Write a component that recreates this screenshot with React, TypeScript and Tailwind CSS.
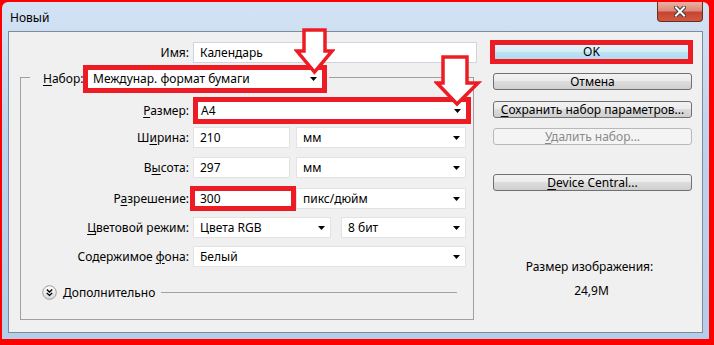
import React from "react";

function Tri() {
  return (
    <svg width="7" height="4" viewBox="0 0 7 4" className="shrink-0">
      <path d="M0 0H7L3.5 4Z" fill="#000" />
    </svg>
  );
}

function U({ children }: { children: React.ReactNode }) {
  return <span className="underline underline-offset-[2px] decoration-[1px]">{children}</span>;
}

function Arrow({ points, className, w, h }: { points: string; className: string; w: number; h: number }) {
  return (
    <svg width={w} height={h} viewBox={`0 0 ${w} ${h}`} className={className}>
      <polygon points={points} fill="#ffffff" stroke="#ed1c24" strokeWidth="3.5" strokeLinejoin="miter" />
    </svg>
  );
}

const btn =
  "ml-[3px] w-[199px] h-[17px] rounded-[3px] border border-[#707070] bg-[linear-gradient(#f2f2f2_0%,#ebebeb_50%,#dddddd_50%,#cfcfcf_100%)] flex items-center justify-center leading-none text-black";

export default function App() {
  return (
    <div className="relative w-[714px] h-[345px] overflow-hidden bg-[#ff0000] pl-[2px] pt-[2px] font-['Noto_Sans',sans-serif] text-[12px] text-black">
      <div className="w-[707px] h-[337px] flex flex-col rounded-t-[6px] bg-[linear-gradient(180deg,#d3e3f4_0%,#bcd3ec_40%,#b4cde8_100%)]">
        {/* title bar */}
        <div className="h-[29px] flex justify-between">
          <span className="pl-[8px] pt-[8px] leading-[16px] text-[12px]">Новый</span>
          <div className="mr-[6px] w-[46px] h-[20px] rounded-b-[4px] border border-t-0 border-[#6b2b22] bg-[linear-gradient(180deg,#eab2a5_0%,#dd8a79_45%,#c8442f_55%,#cf5a3f_100%)] flex items-center justify-center">
            <svg width="12" height="11" viewBox="0 0 12 11">
              <path d="M2 1.5L10 9.5M10 1.5L2 9.5" stroke="#3d3d3d" strokeWidth="4" strokeLinecap="square" />
              <path d="M2 1.5L10 9.5M10 1.5L2 9.5" stroke="#ffffff" strokeWidth="2" strokeLinecap="square" />
            </svg>
          </div>
        </div>
        {/* client */}
        <div className="mx-[6px] w-[695px] h-[302px] border border-[#7d8b9a] bg-[#f0f0f0] flex">
          {/* left column */}
          <div className="w-[481px] flex flex-col">
            <div className="mt-[10px] h-[21px] flex items-center">
              <span className="w-[180px] text-right">Имя:</span>
              <div className="ml-[4px] w-[284px] h-[21px] bg-white border border-[#cdd6e0] flex items-center pl-[6px]">Календарь</div>
            </div>
            <div className="mt-[14px] ml-[11px] w-[454px] h-[243px] border border-[#a0a0a0] flex flex-col">
              {/* legend row */}
              <div className="-mt-[13px] ml-[9px] self-start h-[28px] flex items-center pl-[13px] pr-[2px] bg-[#f0f0f0]">
                <span className="w-[40px]">
                  <U>Н</U>абор:
                </span>
                <div className="w-[244px] h-[28px] border-[5px] border-[#ed1c24] bg-white flex items-center justify-between pl-[5px] pr-[5px]">
                  <span>Междунар. формат бумаги</span>
                  <Tri />
                </div>
              </div>
              {/* Размер */}
              <div className="mt-[4px] h-[27px] flex items-center">
                <span className="w-[168px] text-right">
                  <U>Р</U>азмер:
                </span>
                <div className="ml-[4px] w-[278px] h-[27px] border-[5px] border-[#ed1c24] bg-white flex items-center justify-between pl-[3px] pr-[5px]">
                  <span>A4</span>
                  <Tri />
                </div>
              </div>
              {/* Ширина */}
              <div className="mt-[3px] h-[21px] flex items-center">
                <span className="w-[168px] text-right">
                  Ш<U>и</U>рина:
                </span>
                <div className="ml-[4px] w-[97px] h-[21px] bg-white border border-[#e3e3e3] flex items-center pl-[6px]">210</div>
                <div className="ml-[6px] w-[170px] h-[21px] bg-white border border-[#e3e3e3] flex items-center justify-between pl-[6px] pr-[5px]">
                  <span>мм</span>
                  <Tri />
                </div>
              </div>
              {/* Высота */}
              <div className="mt-[9px] h-[21px] flex items-center">
                <span className="w-[168px] text-right">
                  В<U>ы</U>сота:
                </span>
                <div className="ml-[4px] w-[97px] h-[21px] bg-white border border-[#e3e3e3] flex items-center pl-[6px]">297</div>
                <div className="ml-[6px] w-[170px] h-[21px] bg-white border border-[#e3e3e3] flex items-center justify-between pl-[6px] pr-[5px]">
                  <span>мм</span>
                  <Tri />
                </div>
              </div>
              {/* Разрешение */}
              <div className="mt-[8px] h-[25px] flex items-center">
                <span className="w-[168px] text-right">
                  Р<U>а</U>зрешение:
                </span>
                <div className="ml-[1px] w-[106px] h-[25px] border-[5px] border-[#ed1c24] bg-white flex items-center pl-[5px]">300</div>
                <div className="w-[170px] h-[21px] bg-white border border-[#e3e3e3] flex items-center justify-between pl-[6px] pr-[5px]">
                  <span>пикс/дюйм</span>
                  <Tri />
                </div>
              </div>
              {/* Цветовой режим */}
              <div className="mt-[6px] h-[21px] flex items-center">
                <span className="w-[168px] text-right">
                  <U>Ц</U>ветовой режим:
                </span>
                <div className="ml-[4px] w-[138px] h-[21px] bg-white border border-[#e3e3e3] flex items-center justify-between pl-[6px] pr-[5px]">
                  <span>Цвета RGB</span>
                  <Tri />
                </div>
                <div className="ml-[10px] w-[125px] h-[21px] bg-white border border-[#e3e3e3] flex items-center justify-between pl-[6px] pr-[5px]">
                  <span>8 бит</span>
                  <Tri />
                </div>
              </div>
              {/* Содержимое фона */}
              <div className="mt-[8px] h-[21px] flex items-center">
                <span className="w-[168px] text-right">
                  Содержимое <U>ф</U>она:
                </span>
                <div className="ml-[4px] w-[273px] h-[21px] bg-white border border-[#e3e3e3] flex items-center justify-between pl-[6px] pr-[5px]">
                  <span>Белый</span>
                  <Tri />
                </div>
              </div>
              {/* Дополнительно */}
              <div className="mt-[18px] ml-[21px] w-[415px] h-[15px] flex items-center">
                <svg width="15" height="15" viewBox="0 0 15 15" className="shrink-0">
                  <defs>
                    <linearGradient id="cg" x1="0" y1="0" x2="0" y2="1">
                      <stop offset="0" stopColor="#ffffff" />
                      <stop offset="1" stopColor="#d8d8d8" />
                    </linearGradient>
                  </defs>
                  <circle cx="7.5" cy="7.5" r="6.8" fill="url(#cg)" stroke="#9c9c9c" strokeWidth="1" />
                  <path d="M4.8 4.6L7.5 7.1L10.2 4.6M4.8 7.9L7.5 10.4L10.2 7.9" fill="none" stroke="#000" strokeWidth="1.3" />
                </svg>
                <span className="ml-[6px]">Дополнительно</span>
                <div className="ml-[6px] flex-1 h-px bg-[#a0a0a0]" />
              </div>
            </div>
          </div>
          {/* right column */}
          <div className="w-[203px] flex flex-col">
            <div className="mt-[8px] w-[203px] h-[24px] border-[5px] border-[#ed1c24] bg-[linear-gradient(#e3f3fb_0%,#d3ecf8_50%,#bfe2f3_50%,#b0dbef_100%)] flex items-center justify-center leading-none">
              OK
            </div>
            <div className={`mt-[9px] ${btn}`}>Отмена</div>
            <div className={`mt-[11px] ${btn}`}>
              <span>
                <U>С</U>охранить набор параметров...
              </span>
            </div>
            <div className="mt-[10px] ml-[3px] w-[199px] h-[17px] rounded-[3px] border border-[#b5b9bc] bg-[#f4f4f4] flex items-center justify-center leading-none text-[#8a8a8a]">
              <span>
                <U>У</U>далить набор...
              </span>
            </div>
            <div className={`mt-[29px] ${btn}`}>
              <span>
                <U>D</U>evice Central...
              </span>
            </div>
            <div className="mt-[68px] leading-[16px] text-center pr-[4px]">Размер изображения:</div>
            <div className="mt-[8px] leading-[16px] text-center">24,9M</div>
          </div>
        </div>
      </div>
      {/* annotation arrows */}
      <Arrow w={41} h={47} className="absolute left-[294px] top-[28px]" points="10,2 31,2 31,23 38,23 20.5,44 3,23 10,23" />
      <Arrow w={48} h={52} className="absolute left-[434px] top-[55px]" points="9,2 33,2 33,28 44,28 23,49 3,28 9,28" />
    </div>
  );
}
